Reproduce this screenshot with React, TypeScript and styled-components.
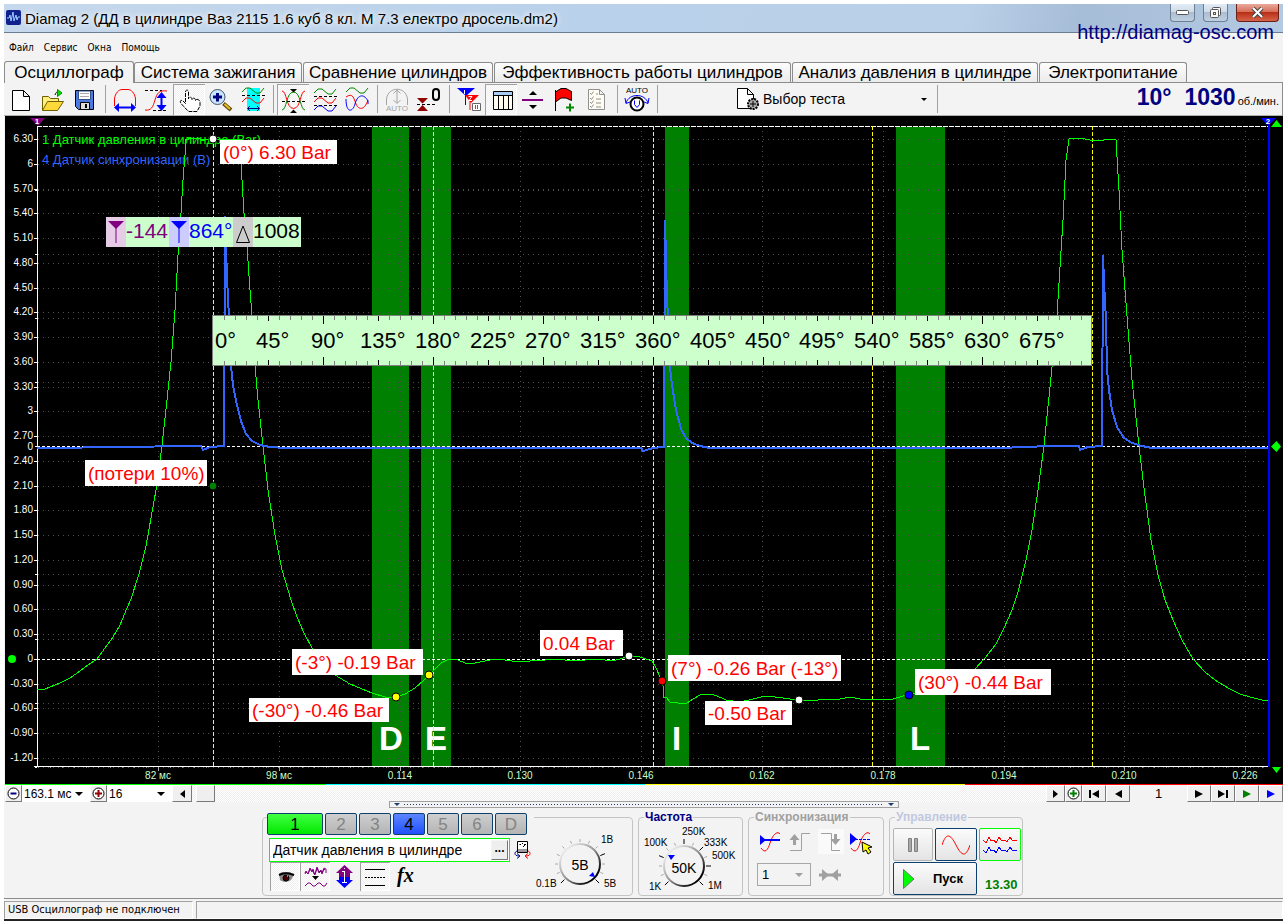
import React from "react";
import styled, { createGlobalStyle } from "styled-components";

const sans = '"Liberation Sans", Arial, sans-serif';
const small = '"DejaVu Sans Condensed", "DejaVu Sans", sans-serif';

const Global = createGlobalStyle`
  * { box-sizing: border-box; }
  body { margin: 0; background: #fff; font-family: ${sans}; color: #000; }
  button, select, input { font-family: inherit; color: inherit; }
  svg { display: block; }
`;

const Page = styled.div`
  display: flex;
  flex-direction: column;
  min-height: 100vh;
  padding: 4px 5px 0 4px;
  background: #fff;
`;
const Frame = styled.div`
  position: relative;
  flex: 1;
  display: flex;
  flex-direction: column;
  background: #f3f3f3;
  border-bottom: 4px solid #242424;
`;

/* ---------- title bar ---------- */
const TitleBar = styled.header`
  display: flex;
  align-items: flex-start;
  height: 29px;
  padding: 0 4px 0 2px;
  border-bottom: 1px solid #6c7d92;
  background: linear-gradient(100deg, #c6d8ec 0%, #b9d1ea 45%, #bad0e8 75%, #a6bdd8 84%, #b4cae2 100%);
`;
const Title = styled.h1`
  margin: 0;
  padding: 5px 0 0 4px;
  flex: 1;
  font-size: 15px;
  line-height: 20px;
  font-weight: 400;
  text-shadow: 0 0 6px #fff, 0 0 6px #fff;
  white-space: nowrap;
`;
const AppIcon = styled.svg`
  margin-top: 6px;
`;
const WinButton = styled.button<{ $close?: boolean }>`
  display: flex;
  align-items: center;
  justify-content: center;
  width: ${(p) => (p.$close ? 43 : 25)}px;
  height: 18px;
  margin-left: 8px;
  padding: 0;
  border: 1px solid ${(p) => (p.$close ? "#6a2018" : "#6f7f92")};
  border-top: 0;
  border-radius: 0 0 4px 4px;
  background: ${(p) =>
    p.$close
      ? "linear-gradient(#e8a99b, #d8705a 45%, #b92f16 50%, #d5644a)"
      : "linear-gradient(#e3ecf6, #cfdcea 45%, #abbdd2 50%, #c0d0e2)"};
`;
const SiteLink = styled.a`
  position: absolute;
  top: 16px;
  right: 9px;
  color: #000080;
  font-size: 20px;
  line-height: 24px;
  text-decoration: none;
`;

/* ---------- menu and tabs ---------- */
const Menu = styled.nav`
  display: flex;
  align-items: center;
  gap: 10px;
  height: 28px;
  padding: 2px 0 0 5px;
`;
const MenuItem = styled.button`
  padding: 0;
  border: 0;
  background: none;
  font-family: ${small};
  font-size: 10px;
  line-height: 14px;
`;
const Tabs = styled.div`
  display: flex;
  align-items: flex-end;
  gap: 1px;
  height: 22px;
  border-bottom: 1px solid #8c8c8c;
`;
const Tab = styled.button<{ $on?: boolean; $w: number }>`
  width: ${(p) => p.$w}px;
  height: ${(p) => (p.$on ? 22 : 20)}px;
  margin-bottom: ${(p) => (p.$on ? -1 : 0)}px;
  margin-right: ${(p) => (p.$on ? -1 : 0)}px;
  padding: 0;
  border: 1px solid #8c8c8c;
  border-bottom: 0;
  border-radius: 3px 3px 0 0;
  background: ${(p) => (p.$on ? "#f3f3f3" : "linear-gradient(#fdfdfd, #ebebeb)")};
  font-size: 17px;
  line-height: 18px;
  white-space: nowrap;
`;

/* ---------- toolbar ---------- */
const Toolbar = styled.div`
  display: flex;
  align-items: center;
  height: 33px;
  padding-left: 1px;
  border-bottom: 1px solid #b0b0b0;
  border-right: 1px solid #8c8c8c;
`;
const dither = "repeating-conic-gradient(#fff 0 25%, #efefef 0 50%) 0 0 / 2px 2px";
const Tool = styled.button<{ $on?: boolean }>`
  width: 32px;
  height: 31px;
  padding: 0;
  border: 0;
  background: ${(p) => (p.$on ? dither : "none")};
  box-shadow: ${(p) => (p.$on ? "inset 1px 1px #a0a0a0, inset -1px -1px #fff" : "none")};
`;
const Separator = styled.i`
  width: 8px;
  height: 28px;
  border: solid transparent;
  border-width: 0 3px 0 4px;
  background: #a0a0a0;
  background-clip: padding-box;
`;
const TestButton = styled.button`
  display: flex;
  align-items: center;
  width: 200px;
  height: 31px;
  margin-left: 72px;
  padding: 0 6px 0 4px;
  border: 0;
  background: none;
  font-size: 14px;
  span { flex: 1; padding-left: 3px; text-align: left; }
`;
const Speed = styled.div`
  display: flex;
  align-items: baseline;
  margin-left: auto;
  padding-right: 3px;
  color: #000080;
  font-size: 23px;
  font-weight: 700;
  line-height: 28px;
  b { margin-right: 13px; }
  small { margin-left: 2px; color: #000; font-size: 11px; font-weight: 400; }
`;

/* ---------- oscillogram ---------- */
const Scope = styled.main`
  position: relative;
  margin: 0 0 0 1px;
  background: #000;
  svg.plot { width: 100%; height: auto; font-family: ${sans}; }
`;
const Readout = styled.div`
  position: absolute;
  top: 101px;
  left: 101px;
  display: flex;
  height: 30px;
  font-size: 21px;
  line-height: 28px;
`;
const Mark = styled.span<{ $bg: string }>`
  display: flex;
  align-items: center;
  justify-content: center;
  width: 20px;
  background: ${(p) => p.$bg};
`;
const Value = styled.span<{ $color: string; $w: number }>`
  width: ${(p) => p.$w}px;
  background: #ccffcc;
  color: ${(p) => p.$color};
`;

/* ---------- navigation row ---------- */
const Strip = styled.div`
  display: grid;
  grid-template-columns: 321fr 319fr 320fr 318fr;
  height: 1px;
  margin: 0 0 0 1px;
`;
const StripPart = styled.i<{ $c: string }>`
  background: ${(p) => p.$c};
`;
const NavRow = styled.div`
  display: flex;
  height: 17px;
  margin: 0 0 0 1px;
`;
const NavButton = styled.button<{ $w: number }>`
  display: flex;
  align-items: center;
  justify-content: center;
  width: ${(p) => p.$w}px;
  height: 17px;
  padding: 0;
  border: 1px solid;
  border-color: #fff #7a7a7a #7a7a7a #fff;
  background: #efefef;
`;
const Drop = styled.div<{ $w: number }>`
  display: grid;
  align-items: center;
  width: ${(p) => p.$w}px;
  background: #fff;
  select {
    grid-area: 1 / 1;
    width: 100%;
    height: 100%;
    padding: 0 0 0 2px;
    border: 0;
    appearance: none;
    background: none;
    font-size: 12px;
  }
  svg { grid-area: 1 / 1; justify-self: end; margin-right: 7px; pointer-events: none; }
`;
const Track = styled.div`
  flex: 1;
  padding-left: 4px;
  background: ${dither};
`;
const PageNo = styled.output`
  width: 57px;
  font-size: 13px;
  line-height: 17px;
  text-align: center;
`;
const Splitter = styled.div`
  display: flex;
  align-items: center;
  justify-content: space-between;
  width: 510px;
  height: 7px;
  margin: -1px auto 0;
  padding: 0 4px;
  border: 1px solid #a0a0a0;
  background: #f3f3f3;
  i { flex: 1; height: 1px; margin: 0 4px; background: repeating-linear-gradient(90deg, #1c3c6c 0 1px, transparent 1px 3px); }
`;

/* ---------- control panels ---------- */
const Panels = styled.section`
  display: flex;
  justify-content: center;
  gap: 5px;
  padding: 2px 2px 2px 0;
  border-bottom: 1px solid #8c8c8c;
`;
const ChannelPanel = styled.div`
  display: flex;
  width: 371px;
  height: 79px;
  margin-top: 7px;
  border: 1px solid #c4c4c4;
  border-radius: 4px;
`;
const ChannelLeft = styled.div`
  width: 271px;
  padding-left: 4px;
`;
const ChannelRow = styled.div`
  display: flex;
  gap: 2px;
  margin-top: -5px;
  background: #f3f3f3;
`;
const ChannelButton = styled.button<{ $kind?: "green" | "blue" }>`
  width: ${(p) => (p.$kind === "green" ? 56 : 32)}px;
  height: 22px;
  padding: 0;
  border: 1px solid #0c4070;
  border-radius: 2px;
  background: ${(p) =>
    p.$kind === "green"
      ? "linear-gradient(#42ff42, #00e800)"
      : p.$kind === "blue"
        ? "linear-gradient(#5c86ff, #2050ff)"
        : "linear-gradient(#cfcfcf, #b4b4b4)"};
  color: ${(p) => (p.$kind ? "#000" : "#848484")};
  font-size: 17px;
  line-height: 19px;
`;
const NameRow = styled.div`
  display: flex;
  align-items: center;
  gap: 3px;
  margin-top: 3px;
  padding-left: 2px;
`;
const NameBox = styled.div`
  display: flex;
  width: 241px;
  height: 24px;
  border: 1px solid #00ff00;
  background: #fff;
  padding: 1px;
  input { flex: 1; min-width: 0; padding: 0 2px; border: 0; background: none; font-size: 14px; }
`;
const MoreButton = styled.button`
  width: 17px;
  padding: 0 0 5px;
  border: 1px solid;
  border-color: #f4f4f4 #777 #777 #f4f4f4;
  background: #eee;
  font-size: 12px;
  line-height: 10px;
  font-weight: 700;
`;
const BareButton = styled.button<{ $w: number; $h: number; $on?: boolean }>`
  width: ${(p) => p.$w}px;
  height: ${(p) => p.$h}px;
  padding: 0;
  border: 0;
  background: ${(p) => (p.$on ? dither : "none")};
  box-shadow: ${(p) => (p.$on ? "inset 1px 1px #a0a0a0, inset -1px -1px #fff" : "none")};
`;
const IconRow = styled.div`
  display: flex;
  padding-left: 3px;
`;
const Group = styled.fieldset<{ $w: number }>`
  width: ${(p) => p.$w}px;
  height: 86px;
  min-width: 0;
  margin: 0;
  padding: 0;
  border: 1px solid #c4c4c4;
  border-radius: 4px;
`;
const Legend = styled.legend<{ $c: string }>`
  margin-left: 5px;
  padding: 0 1px;
  color: ${(p) => p.$c};
  font-size: 12px;
  font-weight: 700;
  line-height: 14px;
`;
const SyncGrid = styled.div`
  display: flex;
  flex-direction: column;
  gap: 8px;
  padding: 3px 0 0 6px;
`;
const SyncRow = styled.div`
  display: flex;
  align-items: center;
`;
const SyncSelect = styled.div`
  display: grid;
  align-items: center;
  width: 54px;
  height: 23px;
  margin: 0 8px 0 2px;
  border: 1px solid #a8a8a8;
  select { grid-area: 1 / 1; width: 100%; height: 100%; padding-left: 4px; border: 0; appearance: none; background: none; font-size: 13px; }
  svg { grid-area: 1 / 1; justify-self: end; margin-right: 7px; pointer-events: none; }
`;
const Controls = styled.div`
  display: grid;
  grid-template-columns: 40px 42px 42px;
  grid-template-rows: 33px 33px;
  gap: 1px 2px;
  padding: 4px 0 0 3px;
`;
const Control = styled.button<{ $c: string; $wide?: boolean }>`
  display: flex;
  align-items: center;
  justify-content: ${(p) => (p.$wide ? "flex-start" : "center")};
  grid-column: span ${(p) => (p.$wide ? 2 : 1)};
  gap: 18px;
  padding: 0 ${(p) => (p.$wide ? 9 : 0)}px;
  border: 1px solid ${(p) => p.$c};
  border-radius: 2px;
  background: linear-gradient(#fbfbfb, #e4e4e4);
  font-size: 13px;
  font-weight: 700;
`;
const Voltage = styled.output`
  align-self: center;
  padding: 12px 0 0 6px;
  color: #008000;
  font-size: 13px;
  font-weight: 700;
  line-height: 14px;
`;
const Status = styled.footer`
  display: flex;
  gap: 3px;
  margin: 2px 0 0;
  div {
    height: 18px;
    padding-left: 3px;
    border: 1px solid;
    border-color: #a0a0a0 #fff #fff #a0a0a0;
    font-family: ${small};
    font-size: 11px;
    line-height: 15px;
    white-space: nowrap;
  }
  div:first-child { width: 189px; }
  div:last-child { flex: 1; }
`;

/* ---------- icons ---------- */
type IconProps = { children: React.ReactNode; w?: number; h?: number };
const Icon = ({ children, w = 32, h = 31 }: IconProps) => (
  <svg width={w} height={h} viewBox={`0 0 ${w} ${h}`} fill="none" stroke="#000" aria-hidden="true">
    {children}
  </svg>
);
const Tri = ({ c = "#000", left }: { c?: string; left?: boolean }) => (
  <svg width="8" height="8" viewBox="0 0 8 8" aria-hidden="true">
    <path d={left ? "M8 0V8L1 4Z" : "M0 0V8L8 4Z"} fill={c} />
  </svg>
);
const Down = ({ c = "#000" }: { c?: string }) => (
  <svg width="8" height="4" viewBox="0 0 8 4" aria-hidden="true">
    <path d="M0 0H8L4 4Z" fill={c} />
  </svg>
);

const wave = (y: number, x = 5) => `M${x} ${y}l4 -4h4l6 5h4l4 -5`;

const icons: Record<string, React.ReactNode> = {
  open_new: (
    <Icon><path d="M7.5 6.500H18.500L24.500 12.500V26.500H7.500Z M18.500 6.500V12.500H24.500" fill="#fff" /></Icon>
  ),
  open: (
    <Icon>
      <path d="M5.500 26V12.500H11.500L13.500 14.500H21.500V18" fill="#ffee80" stroke="#6e6000" />
      <path d="M5.500 26.500L10.500 17.500H26.500L20.500 26.500Z" fill="#ffd83a" stroke="#6e6000" />
      <path d="M18 11C19 8 20 8 21 8" /><path d="M20.500 5.500V12.500L25 9Z" fill="#00e000" stroke="#009000" />
    </Icon>
  ),
  save: (
    <Icon>
      <path d="M6.500 6.500H24.500V25.500H9.500L6.500 22.500Z" fill="#4a7ae0" />
      <path d="M9.500 7H21.500V15.500H9.500Z" fill="#fff" stroke="#33508c" /><path d="M11 9.500H20M11 12.500H20" stroke="#aaa" />
      <path d="M11.500 18.500H20.500V25.500H11.500Z" fill="#ddd" /><path d="M17 20V24" strokeWidth="2" />
    </Icon>
  ),
  hump: (
    <Icon>
      <path d="M5.500 22V15C6 9 10 5.500 13 5.500H19C22 5.500 26 9 26.500 15V22" stroke="#f00" />
      <path d="M8 23.500H24" stroke="#00f" strokeWidth="2" /><path d="M5 23.500L10 19V28ZM27 23.500L22 19V28Z" fill="#00f" stroke="none" />
    </Icon>
  ),
  amp: (
    <Icon>
      <path d="M4 6.500H21M12 26.500H26" strokeDasharray="3 2" /><path d="M4 26C10 27 12 23 14 16S18 6 26 7" stroke="#f00" />
      <path d="M20.500 12V22" stroke="#00f" strokeWidth="2" /><path d="M20.500 8L25.500 14H15.500ZM20.500 27L25.500 21H15.500Z" fill="#00f" stroke="none" />
    </Icon>
  ),
  hand: (
    <Icon>
      <path d="M14.500 26.500L8.500 20C6 17 8 15.500 10 17L12.500 19.500V8C12.500 5.500 15.500 5.500 15.500 8V15C15.500 12.500 19 12.500 19 15.500C19 13.500 22.500 13.500 22.500 16.500C22.500 14.500 27 15 27 18.500V22L24 27.500H16Z" fill="#fff" strokeDasharray="4 1" />
    </Icon>
  ),
  zoom: (
    <Icon>
      <path d="M18.500 19.500L26 26" stroke="#5c4a00" strokeWidth="4" /><path d="M19.500 20L25 25" stroke="#e8bc28" strokeWidth="2" />
      <circle cx="12.500" cy="13" r="7.500" fill="#c8e4ff" stroke="#456" /><path d="M8 13H17M12.500 9V17.500" stroke="#000080" strokeWidth="3" />
    </Icon>
  ),
  window_wave: (
    <Icon>
      <path d="M10 4H23V27H10Z" fill="#00ffff" stroke="none" />
      <path d={wave(8)} stroke="#080" /><path d={wave(18)} stroke="#f00" />
      <path d="M5 11.500H28" strokeDasharray="3 2" />
      <path d="M11 24.500H22M13 22L10.500 24.500L13 27M20 22L22.500 24.500L20 27" stroke="#000080" />
    </Icon>
  ),
  cross: (
    <Icon>
      <path d="M5 26C10 26 9 8 16.500 8S23 26 28 26" stroke="#080" /><path d="M5 7C10 7 9 24.500 16.500 24.500S23 7 28 7" stroke="#f00" />
      <path d="M5 17.500H28" strokeDasharray="3 2" /><path d="M13 5H20L16.500 8.500ZM13 29H20L16.500 25.500Z" fill="#000" stroke="none" />
    </Icon>
  ),
  waves: (
    <Icon>
      <path d={wave(9)} stroke="#080" /><path d={wave(18)} stroke="#f00" /><path d={wave(26)} stroke="#00f" />
      <path d="M5 12.500H28M5 21.500H28" strokeDasharray="3 2" />
    </Icon>
  ),
  overlap: (
    <Icon>
      <path d={wave(8)} stroke="#080" />
      <path d="M5 13C12 8 13 15 15 20S23 28 27 16" stroke="#f00" /><path d="M5 15C5 30 12 28 14 20S22 8 27 17V20" stroke="#00f" />
    </Icon>
  ),
  auto_amp: (
    <Icon>
      <path d="M5.500 21V15C7 2 25 2 26.500 15V21M16 7V19M12.500 9.500L16 6L19.500 9.500M12.500 16L16 19.500L19.500 16" stroke="#a4a4a4" />
      <text x="5" y="27" fontSize="8" fill="#a4a4a4" stroke="none">AUTO</text>
    </Icon>
  ),
  zero: (
    <Icon>
      <path d="M4 14H15L9.500 19.500ZM4 27H15L9.500 21Z" fill="#900000" stroke="none" /><path d="M4 20.500H24" strokeDasharray="3 2" />
      <rect x="20" y="5" width="6" height="11" rx="3" strokeWidth="2" />
    </Icon>
  ),
  cursors: (
    <Icon>
      <path d="M4 4H22L13 12Z" fill="#00f" stroke="none" /><path d="M12.500 5V21" stroke="#00f" /><path d="M11.500 6V10" stroke="#fff" />
      <path d="M12 11H26L18 19Z" fill="#f00" stroke="none" /><path d="M17 12V26" stroke="#f00" /><path d="M15.500 12.500H19L16 16.500H19" stroke="#fff" />
      <path d="M19.500 19.500H27.500V26.500H19.500Z" fill="#fff" stroke="#666" /><path d="M22.500 21V25M24.500 21V25" stroke="#666" />
    </Icon>
  ),
  table: (
    <Icon>
      <path d="M8.500 7.500H27.500V25.500H8.500Z" fill="#fffdf0" /><path d="M9 8H27V11H9Z" fill="#a8ccf4" stroke="none" />
      <path d="M8 11.500H28M13.500 12V25M18.500 12V25M23.500 12V25" />
    </Icon>
  ),
  divide: (
    <Icon>
      <path d="M5 16H26" stroke="#800080" strokeWidth="2" /><path d="M12 11H20L16 7ZM12 21H20L16 25Z" fill="#000" stroke="none" />
    </Icon>
  ),
  flag: (
    <Icon>
      <path d="M6.500 6V27" /><path d="M6.500 8L12 4.500H17L22.500 7.500V16.500L17 14H12L6.500 18Z" fill="#f00" />
      <path d="M17 23.500H25M21 19.500V27.500" stroke="#080" strokeWidth="2" />
    </Icon>
  ),
  checklist: (
    <Icon>
      <path d="M7.500 5.500H18.500L23.500 10.500V25.500H7.500Z M18.500 5.500V10.500H23.500" fill="#fffdf2" stroke="#909090" />
      <path d="M9 9L10.500 10.500L12.500 7.500M9 14L10.500 15.500L12.500 12.500M9 18L10.500 19.500L12.500 16.500M9 22L10.500 23.500L12.500 20.500M15 10H17M15 15H20M15 19H20M15 23H20" stroke="#909090" />
    </Icon>
  ),
  auto_u: (
    <Icon>
      <text x="5" y="9" fontSize="8" fill="#000" stroke="none">AUTO</text>
      <path d="M5 19C8 9 24 9 27 19M4 14L5 19.500L9 18M28 14L27 19.500L23 18" stroke="#00f" />
      <circle cx="16" cy="20" r="6.500" fill="#fff" strokeWidth="2" /><path d="M13.500 16.500V20.500L16 23.500L18.500 20.500V16.500" stroke="#00f" />
    </Icon>
  ),
};

const toolGroups: { icon: string; label: string; on?: boolean }[][] = [
  [{ icon: "open_new", label: "Новый" }, { icon: "open", label: "Открыть" }, { icon: "save", label: "Сохранить" }],
  [
    { icon: "hump", label: "Развёртка" }, { icon: "amp", label: "Усиление" }, { icon: "hand", label: "Перемещение", on: true },
    { icon: "zoom", label: "Масштаб" }, { icon: "window_wave", label: "Выделение" },
  ],
  [{ icon: "cross", label: "Центр", on: true }, { icon: "waves", label: "Раздельно" }, { icon: "overlap", label: "Вместе" }],
  [{ icon: "auto_amp", label: "Авто" }, { icon: "zero", label: "Ноль" }],
  [
    { icon: "cursors", label: "Курсоры" }, { icon: "table", label: "Таблица", on: true }, { icon: "divide", label: "Деление" },
    { icon: "flag", label: "Метка" }, { icon: "checklist", label: "Список" },
  ],
  [{ icon: "auto_u", label: "Автонапряжение" }],
];

const tabs = [
  { t: "Осциллограф", w: 130 },
  { t: "Система зажигания", w: 168 },
  { t: "Сравнение цилиндров", w: 190 },
  { t: "Эффективность работы цилиндров", w: 297 },
  { t: "Анализ давления в цилиндре", w: 246 },
  { t: "Электропитание", w: 148 },
];

/* ---------- plot data ---------- */
const pressureTicks = Array.from({ length: 26 }, (_, i) => {
  const tenths = 63 - i * 3;
  return { y: Math.round(139 + i * 24.76), text: tenths % 30 === 0 ? String(tenths / 10) : (tenths / 10).toFixed(2) };
});
const syncTicks = [190, 254, 318, 382, 446, 510, 574, 639, 703, 767];
const timeTicks = ["82 мс", "98 мс", "0.114", "0.130", "0.146", "0.162", "0.178", "0.194", "0.210", "0.226"].map((text, i) => ({
  x: Math.round(158 + i * 120.8), text,
}));
const phases = [
  { x: 372, w: 37, t: "D", tx: 379 },
  { x: 421, w: 30, t: "E", tx: 425 },
  { x: 665, w: 24, t: "I", tx: 672 },
  { x: 896, w: 49, t: "L", tx: 910 },
];
const pressure =
  "37,689 45,689 50,687 60,683 70,678 80,671 88,665 97,659 105,648 113,637 120,625 127,608 131,599 139,574 146,546 151,518 156,490 160,462 162,445 167,400 171,362 175,310 178,255 181,213 183,180 185,155 185,140 192,138 200,139 213,140 226,139 238,139 241,160 242,180 244,213 247,247 250,290 252,315 255,366 258,400 263,446 268,490 275,535 282,570 291,600 297,617 304,633 312,648 323,665 335,675 350,684 362,689 372,693 385,697 396,697 405,694 415,688 423,681 428,676 435,669 441,663 447,660 452,659 458,660 465,663 475,663 485,661 495,659 505,660 518,662 530,661 545,660 555,659 565,660 575,661 585,660 595,659 605,660 612,661 620,659 629,656 640,657 652,661 656,668 660,677 663,686 664,698 666,697 670,702 678,703 687,703 693,699 700,695 706,694 714,695 722,698 726,700 740,702 753,699 765,696 775,697 790,699 800,700 812,701 825,699 840,699 850,697 860,699 873,699 893,699 903,696 909,695 930,690 950,684 965,676 975,669 985,658 996,644 1004,628 1012,610 1018,592 1026,560 1032,530 1038,490 1044,446 1052,367 1057,315 1060,267 1063,220 1066,160 1069,139 1080,138 1090,140 1104,140 1110,139 1116,140 1119,190 1122,250 1127,316 1132,380 1139,446 1144,488 1151,540 1158,575 1165,600 1173,620 1182,640 1193,659 1205,672 1215,680 1228,688 1240,694 1250,697 1262,700 1268,701";
const sync =
  "37,448 130,447 180,446 201,446 203,450 210,447 224,446 225,216 226,250 228,300 229,315 231,366 233,385 237,405 241,421 246,434 252,441 260,445 270,447 285,448 641,448 643,451 650,449 653,448 664,447 665,220 666,258 667,300 668,315 670,367 672,385 676,410 681,429 686,438 692,443 700,446 710,448 1000,448 1050,446 1079,446 1080,450 1088,447 1102,446 1103,255 1104,282 1106,320 1107,370 1109,390 1112,410 1117,427 1124,438 1132,443 1142,446 1152,448 1268,448";
const notes = [
  { x: 220, y: 140, w: 117, h: 24, t: "(0°) 6.30 Bar" },
  { x: 85, y: 460, w: 122, h: 26, t: "(потери 10%)" },
  { x: 292, y: 649, w: 131, h: 26, t: "(-3°) -0.19 Bar" },
  { x: 249, y: 698, w: 140, h: 24, t: "(-30°) -0.46 Bar" },
  { x: 540, y: 630, w: 83, h: 26, t: "0.04 Bar" },
  { x: 668, y: 655, w: 173, h: 26, t: "(7°) -0.26 Bar (-13°)" },
  { x: 705, y: 701, w: 87, h: 24, t: "-0.50 Bar" },
  { x: 915, y: 669, w: 136, h: 26, t: "(30°) -0.44 Bar" },
];
const dots: [number, number, string][] = [
  [213, 139, "#fff"], [213, 486, "#008000"], [396, 697, "#ffff00"], [429, 675, "#ffff00"],
  [629, 656, "#fff"], [662, 681, "#ff0000"], [799, 700, "#fff"], [909, 695, "#0000ff"],
];

const Plot = () => (
  <svg className="plot" viewBox="5 116 1278 668" role="img" aria-label="Осциллограмма">
    <g shapeRendering="crispEdges" fill="none">
      {phases.map((p) => <rect key={p.t} x={p.x} y="127" width={p.w} height="639" fill="#008000" />)}
      <g stroke="#505050" strokeDasharray="1 4">
        {pressureTicks.map((t) => <path key={t.y} d={`M38 ${t.y + 0.5}H1265`} />)}
        {syncTicks.map((y) => <path key={y} d={`M38 ${y + 0.5}H1265`} />)}
        {timeTicks.map((t) => <path key={t.x} d={`M${t.x + 0.5} 131V766`} />)}
      </g>
      <g stroke="#fff">
        <path d="M37 126.500H1268" strokeDasharray="5 1" />
        <path d="M37 446.500H1268M37 659.500H1268" strokeDasharray="3 2" />
        {pressureTicks.map((t) => <path key={t.y} d={`M34 ${t.y + 0.5}H37`} />)}
        {syncTicks.map((y) => <path key={y} d={`M35 ${y + 0.5}H37`} />)}
        <path d="M37.500 126V767M34 766.500H1268" />
      </g>
      <path d="M38 767.500H1268" stroke="#888" strokeDasharray="1 11" />
      {timeTicks.map((t) => <path key={t.x} d={`M${t.x + 0.5} 767V771`} stroke="#aaa" />)}
    </g>
    <g fill="#fff" fontSize="33" fontWeight="700">
      {phases.map((p) => <text key={p.t} x={p.tx} y="750">{p.t}</text>)}
    </g>
    <g fontSize="13">
      <text x="42" y="144" fill="#00ff00">1 Датчик давления в цилиндре (Bar)</text>
      <text x="42" y="164" fill="#3366ff">4 Датчик синхронизации (В)</text>
    </g>
    <g shapeRendering="crispEdges" fill="none">
      <path d="M213.500 126V766M433.500 126V766M653.500 126V766M872.500 126V766M1092.500 126V766" stroke="#ffff00" strokeDasharray="4 2" />
      <polyline points={pressure} stroke="#00ff00" />
      <polyline points={sync} stroke="#3366ff" strokeWidth="2" />
      <path d="M1268.500 120V767" stroke="#0000ff" strokeWidth="2" />
    </g>
    <g fill="#fff" fontSize="10" textAnchor="end">
      {pressureTicks.map((t) => <text key={t.y} x="33" y={t.y + 3}>{t.text}</text>)}
      <text x="33" y="450">0</text>
    </g>
    <g fill="#ccffcc" fontSize="10" textAnchor="middle">
      {timeTicks.map((t) => <text key={t.x} x={t.x} y="779">{t.text}</text>)}
    </g>
    <path d="M30 118H45L38 126Z" fill="#800080" />
    <path d="M1261 118H1276L1268 126Z" fill="#0000ff" />
    <g fill="#fff" fontSize="8" fontWeight="700" textAnchor="middle">
      <text x="37" y="124">1</text>
      <text x="1268" y="124">2</text>
    </g>
    <path d="M1276.500 120L1282 127H1271ZM1276.500 441L1281 446.500L1276.500 452L1271 446.500ZM1272 767H1281L1276.500 773Z" fill="#00ff00" />
    <circle cx="12" cy="659" r="4" fill="#00ff00" />
    <g shapeRendering="crispEdges">
      <rect x="212.500" y="315.500" width="879" height="50" fill="#ccffcc" stroke="#808080" />
      {Array.from({ length: 79 }, (_, i) => i + 1).map((i) => {
        const x = Math.round(213 + i * 10.99) + 0.5;
        const n = i % 10 === 0 ? 8 : i % 5 === 0 ? 5 : 4;
        return <path key={i} d={`M${x} 316v${n}M${x} 365v${-n}`} stroke={i % 5 ? "#808080" : "#000"} />;
      })}
    </g>
    <g fontSize="22">
      {Array.from({ length: 16 }, (_, i) => (
        <text key={i} x={i === 0 ? 215 : Math.round(213 + i * 54.95) - (i < 3 ? 12 : 18)} y="348">{i * 45}°</text>
      ))}
    </g>
    {notes.map((n) => (
      <g key={n.t}>
        <rect x={n.x} y={n.y} width={n.w} height={n.h} fill="#fff" />
        <text x={n.x + 3} y={n.y + (n.h === 26 ? 20 : 19)} fontSize="19" fill="#ff0000">{n.t}</text>
      </g>
    ))}
    {dots.map(([x, y, c]) => <circle key={`${x}-${y}`} cx={x} cy={y} r="4" fill={c} stroke="#000" />)}
  </svg>
);

const ScaleKnob = ({ big }: { big?: boolean }) => {
  const cx = big ? 45 : 46;
  const cy = big ? 42 : 46;
  const marks = Array.from({ length: 13 }, (_, i) => ((135 + i * 22.5) * Math.PI) / 180);
  return (
    <svg width="98" height="76" viewBox="0 0 98 76" role="img" aria-label={big ? "Частота 50K" : "Диапазон 5В"}>
      <defs>
        <linearGradient id={big ? "kf" : "kv"} x1="0" y1="0" x2="1" y2="1">
          <stop offset="0.15" stopColor="#e8e8e8" />
          <stop offset="0.5" stopColor="#909090" />
          <stop offset="0.85" stopColor="#000" />
        </linearGradient>
      </defs>
      {marks.map((a, i) => {
        const dark = big ? [0, 3, 6, 8, 10, 12].includes(i) : [0, 9, 12].includes(i);
        const far = dark ? 27 : 25;
        return (
          <line key={i} x1={cx + 22 * Math.cos(a)} y1={cy + 22 * Math.sin(a)} x2={cx + far * Math.cos(a)} y2={cy + far * Math.sin(a)}
            stroke={dark ? "#000" : "#aaa"} />
        );
      })}
      <circle cx={cx} cy={cy} r="20" fill="#f3f3f3" stroke={`url(#${big ? "kf" : "kv"})`} strokeWidth="2" />
      {big ? (
        <>
          <path d="M29 31H36L32 36Z" fill="#00f" />
          <text x={cx} y="49" fontSize="14" textAnchor="middle">50K</text>
          <g fontSize="10">
            <text x="5" y="22">100K</text><text x="43" y="11">250K</text><text x="65" y="22">333K</text>
            <text x="73" y="35">500K</text><text x="69" y="65">1M</text><text x="10" y="66">1K</text>
          </g>
        </>
      ) : (
        <>
          <path d="M55 58L59 54L61 59Z" fill="#00f" />
          <text x={cx} y="52" fontSize="14" textAnchor="middle">5В</text>
          <g fontSize="10"><text x="67" y="25">1В</text><text x="2" y="69">0.1В</text><text x="70" y="69">5В</text></g>
        </>
      )}
    </svg>
  );
};

const sine = "M2 17C6 23 9 19 11 12S18 -1 21 3";
const noise = "M0 6l3 3 3 -6 2 4 3 -1 2 3 3 -6 3 4 3 -1 2 2 3 -5 3 4 3 -1 2 2 2 -5";

export default function App() {
  return (
    <Page>
      <Global />
      <Frame>
        <TitleBar>
          <AppIcon width="15" height="15" viewBox="0 0 15 15">
            <rect width="15" height="15" rx="2" fill="#10208c" />
            <path d="M1 8h2l1 -3 1 6 2 -9 1 9 2 -6 1 5 1 -3h2" fill="none" stroke="#9cd0ff" />
          </AppIcon>
          <Title>Diamag 2 (ДД в цилиндре Ваз 2115 1.6 куб 8 кл. М 7.3 електро дросель.dm2)</Title>
          <WinButton aria-label="Свернуть"><svg width="13" height="5"><rect x="0.5" y="0.5" width="12" height="4" rx="1" fill="#fff" stroke="#555" /></svg></WinButton>
          <WinButton aria-label="Восстановить">
            <svg width="13" height="13" fill="#f8f8f8" stroke="#555"><rect x="3.5" y="1.5" width="8" height="8" rx="1" /><rect x="1.500" y="3.500" width="8" height="8" rx="1" /><rect x="4.5" y="6.5" width="2" height="2" /></svg>
          </WinButton>
          <WinButton $close aria-label="Закрыть">
            <svg width="13" height="11"><path d="M2 1L11 10M11 1L2 10" stroke="#444" strokeWidth="4" /><path d="M2 1L11 10M11 1L2 10" stroke="#fff" strokeWidth="2" /></svg>
          </WinButton>
        </TitleBar>
        <SiteLink href="http://diamag-osc.com">http://diamag-osc.com</SiteLink>
        <Menu>
          {["Файл", "Сервис", "Окна", "Помощь"].map((m) => <MenuItem key={m}>{m}</MenuItem>)}
        </Menu>
        <Tabs role="tablist">
          {tabs.map(({ t, w }, i) => (
            <Tab key={t} role="tab" aria-selected={i === 0} $on={i === 0} $w={w}>{t}</Tab>
          ))}
        </Tabs>
        <Toolbar>
          {toolGroups.map((g, i) => (
            <React.Fragment key={i}>
              {g.map((t) => <Tool key={t.icon} aria-label={t.label} $on={t.on}>{icons[t.icon]}</Tool>)}
              <Separator />
            </React.Fragment>
          ))}
          <TestButton>
            <Icon w={23} h={24}>
              <path d="M0.500 1.500H10.500L16.500 7.500V21.500H0.500ZM10.500 1.500V7.500H16.500" fill="#fff" />
              <circle cx="16" cy="17" r="5" fill="#aaa" strokeDasharray="2 1" strokeWidth="2" /><path d="M13 17H19M16 14V20" />
            </Icon>
            <span>Выбор теста</span>
            <svg width="6" height="3"><path d="M0 0H6L3 3Z" /></svg>
          </TestButton>
          <Separator />
          <Speed><b>10°</b>1030<small>об./мин.</small></Speed>
        </Toolbar>

        <Scope>
          <Plot />
          <Readout>
            <Mark $bg="#e6cce6"><Icon w={16} h={24}><path d="M0 1H16L8 9Z" fill="#800080" stroke="none" /><path d="M8 8V23" stroke="#800080" /></Icon></Mark>
            <Value $color="#800080" $w={43}>-144</Value>
            <Mark $bg="#ccccff"><Icon w={16} h={24}><path d="M0 1H16L8 9Z" fill="#0000ff" stroke="none" /><path d="M8 8V23" stroke="#0000ff" /></Icon></Mark>
            <Value $color="#0000ff" $w={44}>864°</Value>
            <Mark $bg="#cccccc"><Icon w={16} h={24}><path d="M8 6L14.500 22.500H1.500Z" /></Icon></Mark>
            <Value $color="#000" $w={48}>1008</Value>
          </Readout>
        </Scope>

        <Strip>
          {["#00ff00", "#00ffff", "#ffff00", "#ff0000"].map((c) => <StripPart key={c} $c={c} />)}
        </Strip>
        <NavRow>
          <NavButton $w={17} aria-label="Уменьшить"><Icon w={13} h={13}><circle cx="6.5" cy="6.5" r="5.500" fill="#fff" /><path d="M3.500 6.500H9.500" stroke="#000080" strokeWidth="2" /></Icon></NavButton>
          <Drop $w={68}><select aria-label="Время"><option>163.1 мс</option></select><Down /></Drop>
          <NavButton $w={17} aria-label="Увеличить"><Icon w={13} h={13}><circle cx="6.5" cy="6.5" r="5.500" fill="#fff" /><path d="M3 6.500H10M6.500 3V10" stroke="#900000" strokeWidth="2" /></Icon></NavButton>
          <Drop $w={65}><select aria-label="Масштаб"><option>16</option></select><Down /></Drop>
          <NavButton $w={20} aria-label="Влево"><svg width="5" height="8"><path d="M5 0V8L0 4Z" /></svg></NavButton>
          <Track>
            <NavButton $w={19} aria-label="Положение" />
          </Track>
          <NavButton $w={19} aria-label="Вправо"><svg width="5" height="8"><path d="M0 0V8L5 4Z" /></svg></NavButton>
          <NavButton $w={17} aria-label="Добавить"><Icon w={13} h={13}><circle cx="6.5" cy="6.5" r="5.500" fill="#fff" /><path d="M3 6.500H10M6.500 3V10" stroke="#008000" strokeWidth="2" /></Icon></NavButton>
          <NavButton $w={24} aria-label="В начало"><svg width="10" height="8"><path d="M0 0H2V8H0ZM10 0V8L3 4Z" /></svg></NavButton>
          <NavButton $w={24} aria-label="Назад"><Tri left /></NavButton>
          <PageNo>1</PageNo>
          <NavButton $w={24} aria-label="Вперёд"><Tri /></NavButton>
          <NavButton $w={24} aria-label="В конец"><svg width="10" height="8"><path d="M0 0V8L7 4ZM8 0H10V8H8Z" /></svg></NavButton>
          <NavButton $w={24} aria-label="Воспроизвести"><Tri c="#008000" /></NavButton>
          <NavButton $w={24} aria-label="Следующий"><Tri c="#0000ff" /></NavButton>
        </NavRow>
        <Splitter><svg width="6" height="3"><path d="M0 0H6L3 3Z" fill="#1c3c6c" /></svg><i /><svg width="6" height="3"><path d="M0 0H6L3 3Z" fill="#1c3c6c" /></svg></Splitter>

        <Panels>
          <ChannelPanel>
            <ChannelLeft>
              <ChannelRow>
                {["1", "2", "3", "4", "5", "6", "D"].map((c) => (
                  <ChannelButton key={c} $kind={c === "1" ? "green" : c === "4" ? "blue" : undefined}>{c}</ChannelButton>
                ))}
              </ChannelRow>
              <NameRow>
                <NameBox>
                  <input aria-label="Название канала" defaultValue="Датчик давления в цилиндре" />
                  <MoreButton aria-label="Ещё">...</MoreButton>
                </NameBox>
                <BareButton $w={20} $h={22} aria-label="Прибор">
                  <Icon w={20} h={22}>
                    <path d="M4.500 2.500H14.500V13.500H4.500Z" fill="#fff" /><path d="M5 11.500H14" stroke="#9a9a9a" strokeWidth="3" /><path d="M6.500 5.500H8M9 4.500H10M11 5.500H13M10 8L12 6" />
                    <path d="M4 12C1 13 1 17 6 17M4 14.500L7 17L4 19.500" stroke="#000080" /><path d="M15 12C18 13 18 17 13 17M15 14.500L12 17L15 19.500" stroke="#f00" />
                  </Icon>
                </BareButton>
              </NameRow>
              <IconRow>
                <BareButton $w={30} $h={29} $on aria-label="Видимость">
                  <Icon w={30} h={29}>
                    <path d="M9 12L12 10H20L24 13L21 18C17 21 12 20 10 18Z" fill="#8a8a8a" stroke="none" />
                    <path d="M9 13C13 11 19 11 24 13" strokeWidth="2" /><circle cx="16" cy="16" r="3" fill="#400" /><path d="M17 14h1" stroke="#fff" />
                  </Icon>
                </BareButton>
                <BareButton $w={30} $h={29} $on aria-label="Фильтр">
                  <Icon w={30} h={29}>
                    <path d="M5 11l1 -2 2 3 2 -6 2 3 1 -2 1 4 1 1 2 -7 2 5 2 -2 1 3 2 -5 2 1v4" stroke="#800080" />
                    <path d="M5 12l1 -2 2 2 2 -5 2 3 1 -2 1 4 1 1 2 -7 2 5 2 -2 1 3 2 -5 1 1" stroke="#800080" />
                    <path d="M12 14H19L15.500 18Z" fill="#000" stroke="none" /><path d="M5 24l3 -3h2l3 3h2l3 -3h2l3 3h2l2 -3" stroke="#800080" />
                  </Icon>
                </BareButton>
                <BareButton $w={30} $h={29} aria-label="Инверсия">
                  <Icon w={30} h={29}>
                    <path d="M14.500 3L23 11H20V15H9V11H6Z" fill="#800080" stroke="none" /><path d="M14.500 26L23 18H20V15H9V18H6Z" fill="#00f" stroke="none" />
                    <path d="M12 9.500H15M14.500 10V20M12 20.500H17M14 6.500H15" stroke="#fff" />
                  </Icon>
                </BareButton>
                <BareButton $w={30} $h={29} $on aria-label="Уровни">
                  <Icon w={30} h={29}><path d="M5 7.500H25M5 23.500H25" /><path d="M5 15.500H25" strokeDasharray="2 1" /></Icon>
                </BareButton>
                <BareButton $w={30} $h={29} aria-label="Формула">
                  <Icon w={30} h={29}><text x="7" y="20" fontSize="20" fontStyle="italic" fontWeight="700" fontFamily="Liberation Serif, serif" fill="#000" stroke="none">fx</text></Icon>
                </BareButton>
              </IconRow>
            </ChannelLeft>
            <ScaleKnob />
          </ChannelPanel>
          <Group $w={105}>
            <Legend $c="#000080">Частота</Legend>
            <ScaleKnob big />
          </Group>
          <Group $w={136}>
            <Legend $c="#a0a0a0">Синхронизация</Legend>
            <SyncGrid>
              <SyncRow>
                <BareButton $w={30} $h={28} aria-label="Уровень">
                  <Icon w={30} h={28}><g transform="translate(4 4)"><path d={sine} stroke="#f00" /><path d="M1 9H21" stroke="#00f" strokeWidth="2" /><path d="M1 4V14L7 9Z" fill="#00f" stroke="none" /></g></Icon>
                </BareButton>
                <BareButton $w={30} $h={28} aria-label="Фронт">
                  <Icon w={30} h={28}><path d="M5 23.500H16.500V6.500H25" stroke="#a0a0a0" /><path d="M9.500 12V18" stroke="#a0a0a0" strokeWidth="3" /><path d="M9.500 7L14.500 13H4.500Z" fill="#a0a0a0" stroke="none" /></Icon>
                </BareButton>
                <BareButton $w={30} $h={28} aria-label="Спад">
                  <Icon w={30} h={28}><path d="M3 2H29V27H3Z" fill="#fafafa" stroke="none" /><path d="M6 6.500H16.500V23.500H25" stroke="#a0a0a0" /><path d="M20.500 7V13" stroke="#a0a0a0" strokeWidth="3" /><path d="M20.500 18L25.500 12H15.500Z" fill="#a0a0a0" stroke="none" /></Icon>
                </BareButton>
                <BareButton $w={30} $h={28} aria-label="Захват">
                  <Icon w={30} h={28}><g transform="translate(4 4)"><path d={sine} stroke="#f00" /><path d="M6 8.500H22" stroke="#00f" strokeDasharray="3 1" /><path d="M1 2V14L8 8Z" fill="#00f" stroke="none" /><path d="M13 11L23 16L19 17L22 21L19 23L17 19L14 21Z" fill="#ff0" /></g></Icon>
                </BareButton>
              </SyncRow>
              <SyncRow>
                <SyncSelect><select aria-label="Канал синхронизации"><option>1</option></select><Down c="#a0a0a0" /></SyncSelect>
                <BareButton $w={22} $h={22} aria-label="Сжать">
                  <Icon w={22} h={22}><path d="M0 11H22" stroke="#a0a0a0" strokeWidth="3" /><path d="M3 5V17L10 11ZM19 5V17L12 11Z" fill="#a0a0a0" stroke="none" /></Icon>
                </BareButton>
              </SyncRow>
            </SyncGrid>
          </Group>
          <Group $w={134}>
            <Legend $c="#c0c8e0">Управление</Legend>
            <Controls>
              <Control $c="#b4b4b4" aria-label="Пауза"><Icon w={12} h={16}><path d="M1.500 1.500H4.500V14.500H1.500ZM7.500 1.500H10.500V14.500H7.500Z" fill="#aaa" stroke="#808080" /></Icon></Control>
              <Control $c="#0c4070" aria-label="Синус"><Icon w={28} h={20}><path d="M0 10C4 -2 8 -2 14 10S24 22 28 10" stroke="#f00" /></Icon></Control>
              <Control $c="#00ff00" aria-label="Каналы"><Icon w={34} h={22}><g shapeRendering="crispEdges"><path d={noise} stroke="#f00" /><path d={noise} stroke="#00f" transform="translate(0 10)" /></g></Icon></Control>
              <Control $c="#0c4070" $wide><svg width="12" height="20"><path d="M0.500 0.500V19.500L11 10Z" fill="#00ff00" stroke="#707070" /></svg>Пуск</Control>
              <Voltage>13.30</Voltage>
            </Controls>
          </Group>
        </Panels>
        <Status><div>USB Осциллограф не подключен</div><div /></Status>
      </Frame>
    </Page>
  );
}
